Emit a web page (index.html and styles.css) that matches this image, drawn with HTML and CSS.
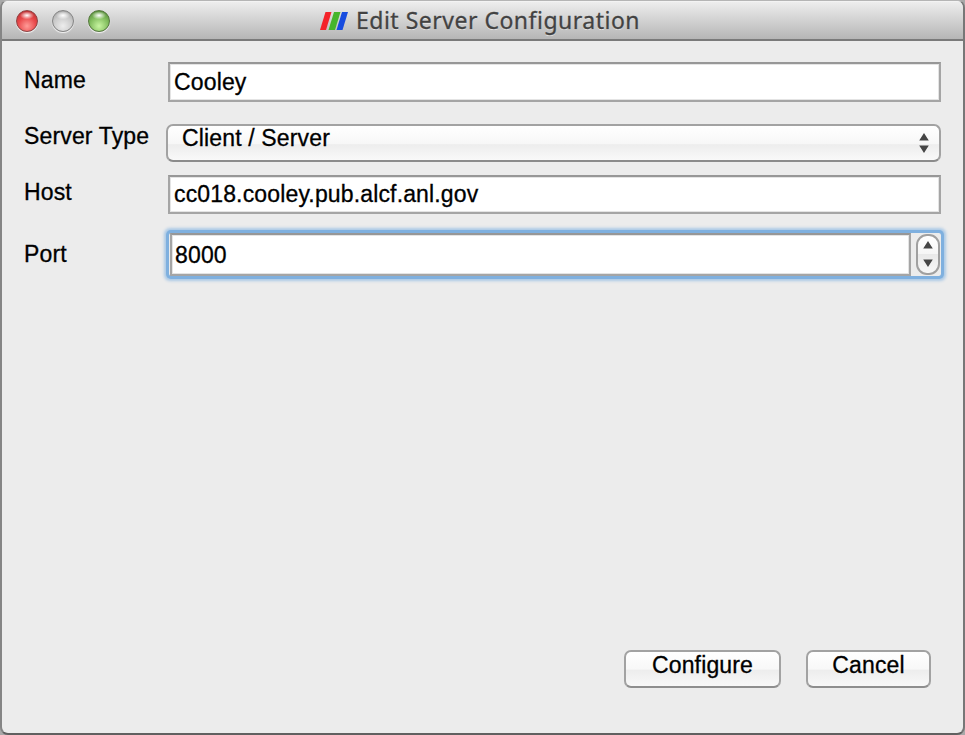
FILE: index.html
```html
<!DOCTYPE html>
<html lang="en">
<head>
<meta charset="utf-8">
<title>Edit Server Configuration</title>
<link rel="stylesheet" href="styles.css">
</head>
<body>
<main class="window">
  <header class="titlebar">
    <div class="lights">
      <span class="light red"></span><span class="light gray"></span><span class="light green"></span>
    </div>
    <svg class="logo" width="29" height="20" viewBox="0 0 29 20">
      <path fill="#f4232a" d="M5.500 1h6L6 19H0z"/>
      <path fill="#45b52c" d="M14 1h6.500L15 19H8.500z"/>
      <path fill="#174cdf" d="M22 1h6l-5.500 18h-6z"/>
    </svg>
    <h1 class="title">Edit Server Configuration</h1>
  </header>
  <section class="form">
    <div class="row row-name"><span class="label">Name</span><div class="field"><span>Cooley</span></div></div>
    <div class="row row-type"><span class="label">Server Type</span>
      <div class="select"><span>Client / Server</span>
        <svg width="10" height="20" viewBox="0 0 10 20"><path fill="#454545" d="M5 0l4.800 7.500H.2zM.2 12.500h9.600L5 20z"/></svg>
      </div></div>
    <div class="row row-host"><span class="label">Host</span><div class="field host"><span>cc018.cooley.pub.alcf.anl.gov</span></div></div>
    <div class="row row-port"><span class="label">Port</span>
      <div class="spin"><div class="field port"><span>8000</span></div>
        <div class="stepper"><svg width="10" height="26" viewBox="0 0 10 26"><path fill="#454545" d="M5 0l4.800 7.500H.2zM.2 18.500h9.600L5 26z"/></svg></div>
      </div></div>
  </section>
  <footer class="actions"><div class="button configure">Configure</div><div class="button cancel">Cancel</div></footer>
</main>
</body>
</html>
```
FILE: styles.css
```css
* { box-sizing: border-box; }
body { margin: 0; background: #a9a9a9; font: 23px/28px "Liberation Sans", Arial, sans-serif; color: #000; letter-spacing: .15px; -webkit-text-stroke: .3px; }
.window { width: 965px; height: 735px; display: flex; flex-direction: column; background: #ececec; border: 2px solid #777; border-top: 1px solid #b5b5b5; border-left-color: #858585; border-bottom-color: #606060; border-radius: 8px; overflow: hidden; }
.titlebar { height: 40px; flex: none; display: flex; align-items: flex-start; background: linear-gradient(#ededed, #d4d4d4 45%, #b6b6b6); border-bottom: 2px solid #7a7a7a; border-top: 1px solid #f3f3f3; }
.lights { display: flex; gap: 14px; padding: 8px 0 0 14px; width: 318px; }
.light { width: 22px; height: 22px; border-radius: 50%; border: 1px solid #777; box-shadow: 0 1px 1px #f5f5f5; }
.red { border-color: #914343; background: radial-gradient(ellipse 7px 4px at 50% 22%, #fff, transparent), radial-gradient(circle at 50% 75%, #ff9c98, #e9484a 50%, #ac2427); }
.gray { border-color: #858585; background: radial-gradient(ellipse 7px 4px at 50% 22%, #fff, transparent), radial-gradient(circle at 50% 75%, #ededed, #c9c9c9 55%, #999); }
.green { border-color: #55783e; background: radial-gradient(ellipse 7px 4px at 50% 22%, #fff, transparent), radial-gradient(circle at 50% 75%, #c8f5a1, #84bf60 50%, #467a2d); }
.logo { margin: 9px 7px 0 0; flex: none; }
.title { margin: 3px 0 0; font: 400 23px/30px "Noto Sans", sans-serif; color: #424242; text-shadow: 0 1px 0 #e8e8e8; white-space: nowrap; letter-spacing: .5px; }
.form { padding: 21px 22px 0; display: flex; flex-direction: column; }
.row { display: grid; grid-template-columns: 144px 1fr; align-items: start; }
.row-name { height: 62px; }
.row-type { height: 51px; }
.row-host { height: 58px; }
.row-port { height: 45px; }
.label { margin-top: 4px; white-space: nowrap; }
.row-type .label { margin-top: -2px; }
.row-host .label { margin-top: 3px; }
.row-port .label { margin-top: 7px; }
.field { height: 40px; background: #fff; border: 2px solid #a5a5a5; border-top-color: #979797; box-shadow: inset 0 0 0 1px #e4e4e4; padding: 4px 4px 0; }
.host { height: 39px; padding-top: 3px; }
.select { height: 38px; margin-left: -2px; display: flex; justify-content: space-between; border: 2px solid #a2a2a2; border-bottom-color: #8b8b8b; border-radius: 7px; background: linear-gradient(#fff, #f7f7f7 52%, #ededed 55%, #f9f9f9); padding: 0 10px 0 14px; }
.select span { margin-top: -2px; }
.select svg { margin-top: 7px; }
.spin { height: 43px; margin-left: 1px; display: flex; justify-content: space-between; padding: 0 1px; box-shadow: 0 0 0 3px #7fb0df, 0 0 3px 5px #abc9e6; border-radius: 2px; }
.port { width: 741px; height: 43px; padding: 6px 3px 0; }
.stepper { width: 24px; height: 41px; margin-top: 1px; border: 2px solid #a0a0a0; border-radius: 11px; background: linear-gradient(#fff, #f6f6f6 48%, #e9e9e9 50%, #f7f7f7); display: flex; justify-content: center; padding-top: 5px; }
.actions { margin: auto 32px 45px auto; display: flex; gap: 25px; }
.button { height: 38px; border: 2px solid #a2a2a2; border-bottom-color: #8e8e8e; border-radius: 7px; background: linear-gradient(#fff, #f8f8f8 50%, #ededed 54%, #f8f8f8); text-align: center; line-height: 27px; }
.configure { width: 157px; }
.cancel { width: 125px; }
```
